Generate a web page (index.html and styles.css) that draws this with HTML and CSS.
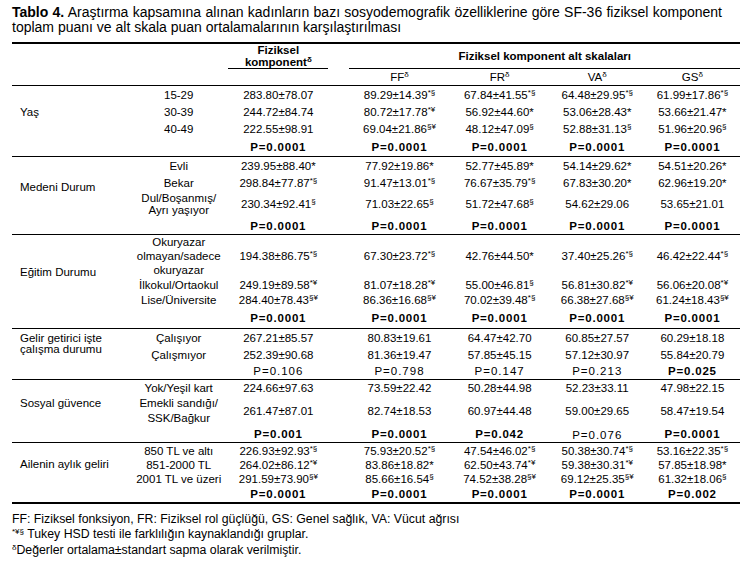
FILE: index.html
```html
<!DOCTYPE html>
<html lang="tr">
<head>
  <meta charset="UTF-8">
  <title>Tablo 4 - SF-36 fiziksel komponent</title>
  <meta name="viewport" content="width=device-width, initial-scale=1">
  <link rel="stylesheet" href="styles.css">
</head>
<body>
  <div class="page">
    <p class="caption"><b>Tablo 4.</b> Araştırma kapsamına alınan kadınların bazı sosyodemografik özelliklerine göre SF-36 fiziksel komponent toplam puanı ve alt skala puan ortalamalarının karşılaştırılması</p>

    <table class="data">
      <colgroup>
        <col class="c-cat">
        <col class="c-sub">
        <col class="c-val">
        <col class="c-gap">
        <col class="c-val">
        <col class="c-val">
        <col class="c-val2">
        <col class="c-val2">
      </colgroup>
      <thead>
        <tr class="head-top">
          <th></th>
          <th></th>
          <th class="rule top-al">Fiziksel<br>komponent<sup>δ</sup></th>
          <th></th>
          <th class="rule" colspan="4">Fiziksel komponent alt skalaları</th>
        </tr>
        <tr class="head-sub">
          <th></th>
          <th></th>
          <th></th>
          <th></th>
          <th class="thin">FF<sup>δ</sup></th>
          <th class="thin">FR<sup>δ</sup></th>
          <th class="thin">VA<sup>δ</sup></th>
          <th class="thin">GS<sup>δ</sup></th>
        </tr>
      </thead>

      <tbody>
        <tr class="h18">
          <td class="cat" rowspan="3">Yaş</td>
          <td>15-29</td>
          <td>283.80±78.07</td><td></td>
          <td>89.29±14.39<sup>*§</sup></td>
          <td>67.84±41.55<sup>*§</sup></td>
          <td>64.48±29.95<sup>*§</sup></td>
          <td>61.99±17.86<sup>*§</sup></td>
        </tr>
        <tr class="h17">
          <td>30-39</td>
          <td>244.72±84.74</td><td></td>
          <td>80.72±17.78<sup>*¥</sup></td>
          <td>56.92±44.60*</td>
          <td>53.06±28.43*</td>
          <td>53.66±21.47*</td>
        </tr>
        <tr class="h17">
          <td>40-49</td>
          <td>222.55±98.91</td><td></td>
          <td>69.04±21.86<sup>§¥</sup></td>
          <td>48.12±47.09<sup>§</sup></td>
          <td>52.88±31.13<sup>§</sup></td>
          <td>51.96±20.96<sup>§</sup></td>
        </tr>
        <tr class="h19">
          <td></td><td></td>
          <td class="p sig">P=0.0001</td><td></td>
          <td class="p sig">P=0.0001</td>
          <td class="p sig">P=0.0001</td>
          <td class="p sig">P=0.0001</td>
          <td class="p sig">P=0.0001</td>
        </tr>
      </tbody>

      <tbody>
        <tr class="h18">
          <td class="cat" rowspan="3">Medeni Durum</td>
          <td>Evli</td>
          <td>239.95±88.40*</td><td></td>
          <td>77.92±19.86*</td>
          <td>52.77±45.89*</td>
          <td>54.14±29.62*</td>
          <td>54.51±20.26*</td>
        </tr>
        <tr class="h16">
          <td>Bekar</td>
          <td>298.84±77.87<sup>*§</sup></td><td></td>
          <td>91.47±13.01<sup>*§</sup></td>
          <td>76.67±35.79<sup>*§</sup></td>
          <td>67.83±30.20*</td>
          <td>62.96±19.20*</td>
        </tr>
        <tr class="h27">
          <td>Dul/Boşanmış/<br>Ayrı yaşıyor</td>
          <td>230.34±92.41<sup>§</sup></td><td></td>
          <td>71.03±22.65<sup>§</sup></td>
          <td>51.72±47.68<sup>§</sup></td>
          <td>54.62±29.06</td>
          <td>53.65±21.01</td>
        </tr>
        <tr class="h17">
          <td></td><td></td>
          <td class="p sig">P=0.0001</td><td></td>
          <td class="p sig">P=0.0001</td>
          <td class="p sig">P=0.0001</td>
          <td class="p sig">P=0.0001</td>
          <td class="p sig">P=0.0001</td>
        </tr>
      </tbody>

      <tbody>
        <tr class="h43">
          <td class="cat" rowspan="3">Eğitim Durumu</td>
          <td class="tall">Okuryazar<br>olmayan/sadece<br>okuryazar</td>
          <td>194.38±86.75<sup>*§</sup></td><td></td>
          <td>67.30±23.72<sup>*§</sup></td>
          <td>42.76±44.50*</td>
          <td>37.40±25.26<sup>*§</sup></td>
          <td>46.42±22.44<sup>*§</sup></td>
        </tr>
        <tr class="h14">
          <td>İlkokul/Ortaokul</td>
          <td>249.19±89.58<sup>*¥</sup></td><td></td>
          <td>81.07±18.28<sup>*¥</sup></td>
          <td>55.00±46.81<sup>§</sup></td>
          <td>56.81±30.82<sup>*¥</sup></td>
          <td>56.06±20.08<sup>*¥</sup></td>
        </tr>
        <tr class="h17">
          <td>Lise/Üniversite</td>
          <td>284.40±78.43<sup>§¥</sup></td><td></td>
          <td>86.36±16.68<sup>§¥</sup></td>
          <td>70.02±39.48<sup>*§</sup></td>
          <td>66.38±27.68<sup>§¥</sup></td>
          <td>61.24±18.43<sup>§¥</sup></td>
        </tr>
        <tr class="h20">
          <td></td><td></td>
          <td class="p sig">P=0.0001</td><td></td>
          <td class="p sig">P=0.0001</td>
          <td class="p sig">P=0.0001</td>
          <td class="p sig">P=0.0001</td>
          <td class="p sig">P=0.0001</td>
        </tr>
      </tbody>

      <tbody>
        <tr class="h18">
          <td class="cat tight" rowspan="2">Gelir getirici işte<br>çalışma durumu</td>
          <td>Çalışıyor</td>
          <td>267.21±85.57</td><td></td>
          <td>80.83±19.61</td>
          <td>64.47±42.70</td>
          <td>60.85±27.57</td>
          <td>60.29±18.18</td>
        </tr>
        <tr class="h17">
          <td>Çalışmıyor</td>
          <td>252.39±90.68</td><td></td>
          <td>81.36±19.47</td>
          <td>57.85±45.15</td>
          <td>57.12±30.97</td>
          <td>55.84±20.79</td>
        </tr>
        <tr class="h16">
          <td></td><td></td>
          <td class="p">P=0.106</td><td></td>
          <td class="p">P=0.798</td>
          <td class="p">P=0.147</td>
          <td class="p">P=0.213</td>
          <td class="p sig">P=0.025</td>
        </tr>
      </tbody>

      <tbody>
        <tr class="h16">
          <td class="cat" rowspan="2">Sosyal güvence</td>
          <td>Yok/Yeşil kart</td>
          <td>224.66±97.63</td><td></td>
          <td>73.59±22.42</td>
          <td>50.28±44.98</td>
          <td>52.23±33.11</td>
          <td>47.98±22.15</td>
        </tr>
        <tr class="h30">
          <td class="two">Emekli sandığı/<br>SSK/Bağkur</td>
          <td>261.47±87.01</td><td></td>
          <td>82.74±18.53</td>
          <td>60.97±44.48</td>
          <td>59.00±29.65</td>
          <td>58.47±19.54</td>
        </tr>
        <tr class="h17">
          <td></td><td></td>
          <td class="p sig">P=0.001</td><td></td>
          <td class="p sig">P=0.0001</td>
          <td class="p sig">P=0.042</td>
          <td class="p low">P=0.076</td>
          <td class="p sig">P=0.0001</td>
        </tr>
      </tbody>

      <tbody class="last">
        <tr class="h16">
          <td class="cat" rowspan="3">Ailenin aylık geliri</td>
          <td>850 TL ve altı</td>
          <td>226.93±92.93<sup>*§</sup></td><td></td>
          <td>75.93±20.52<sup>*§</sup></td>
          <td>47.54±46.02<sup>*§</sup></td>
          <td>50.38±30.74<sup>*§</sup></td>
          <td>53.16±22.35<sup>*§</sup></td>
        </tr>
        <tr class="h13">
          <td>851-2000 TL</td>
          <td>264.02±86.12<sup>*¥</sup></td><td></td>
          <td>83.86±18.82*</td>
          <td>62.50±43.74<sup>*¥</sup></td>
          <td>59.38±30.31<sup>*¥</sup></td>
          <td>57.85±18.98*</td>
        </tr>
        <tr class="h14">
          <td>2001 TL ve üzeri</td>
          <td>291.59±73.90<sup>§¥</sup></td><td></td>
          <td>85.66±16.54<sup>§</sup></td>
          <td>74.52±38.28<sup>§¥</sup></td>
          <td>69.12±25.35<sup>§¥</sup></td>
          <td>61.32±18.06<sup>§</sup></td>
        </tr>
        <tr class="h17">
          <td></td><td></td>
          <td class="p sig">P=0.0001</td><td></td>
          <td class="p sig">P=0.0001</td>
          <td class="p sig">P=0.0001</td>
          <td class="p sig">P=0.0001</td>
          <td class="p sig">P=0.002</td>
        </tr>
      </tbody>
    </table>

    <div class="notes">
      <p>FF: Fiziksel fonksiyon, FR: Fiziksel rol güçlüğü, GS: Genel sağlık, VA: Vücut ağrısı</p>
      <p><sup>*¥§</sup> Tukey HSD testi ile farklılığın kaynaklandığı gruplar.</p>
      <p><sup>δ</sup>Değerler ortalama±standart sapma olarak verilmiştir.</p>
    </div>
  </div>
</body>
</html>
```

FILE: styles.css
```css
body {
  margin: 0;
  font-family: 'Liberation Sans', Arial, sans-serif;
  background: #fff;
  color: #000;
}
.page {
  width: 728px;
  padding: 5px 0 0 12px;
}
.caption {
  margin: 0 18px 7px 0;
  font-size: 14px;
  line-height: 15px;
  text-align: justify;
}
sup {
  font-size: 8px;
  line-height: 0;
  vertical-align: 4px;
}

/* table */
.data {
  width: 728px;
  table-layout: fixed;
  border-collapse: collapse;
  border-top: 2px solid #000;
  font-size: 11.5px;
  line-height: 12px;
}
.c-cat { width: 117px; }
.c-sub { width: 99px; }
.c-val { width: 100px; }
.c-gap { width: 21px; }
.c-val2 { width: 95px; }
.data th,
.data td {
  padding: 0 1px;
  text-align: center;
  vertical-align: middle;
  white-space: nowrap;
}
.data th {
  font-weight: bold;
}
.data th.thin {
  font-weight: normal;
}
.data th.rule {
  border-bottom: 1px solid #000;
}
.data th.top-al {
  vertical-align: top;
  line-height: 12px;
  padding-top: 0;
}
.head-top { height: 25px; }
.head-sub { height: 17px; }
.data thead {
  border-bottom: 1px solid #000;
}
.data tbody {
  border-bottom: 1px solid #000;
}
.data tbody.last {
  border-bottom: 2px solid #000;
}
.data td.cat {
  text-align: left;
  padding-left: 8px;
}
.data td.tight {
  line-height: 10.5px;
  vertical-align: top;
  padding-top: 4px;
}
.data td.tall { line-height: 14px; }
.data td.two { line-height: 15px; }
.data td.p {
  letter-spacing: 1px;
}
.data td.sig {
  font-weight: bold;
  letter-spacing: 0.8px;
}
.data td.low {
  padding-top: 3px;
}

.h13 { height: 13px; }
.h14 { height: 14px; }
.h16 { height: 16px; }
.h17 { height: 17px; }
.h18 { height: 18px; }
.h19 { height: 19px; }
.h20 { height: 20px; }
.h27 { height: 27px; }
.h30 { height: 30px; }
.h43 { height: 43px; }

/* notes under table */
.notes {
  margin-top: 8px;
  font-size: 12.3px;
  line-height: 15.5px;
}
.notes p {
  margin: 0;
}
.notes sup {
  vertical-align: 4px;
}
```
